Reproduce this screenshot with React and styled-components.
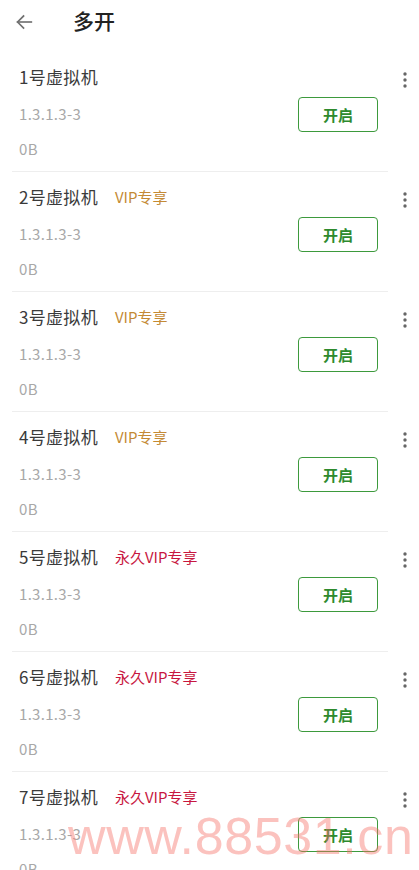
import styled, { createGlobalStyle } from "styled-components"

const GlobalStyle = createGlobalStyle`
    body {
        margin: 0;
        background: #ffffff;
        font-family: "Noto Sans CJK SC", "Noto Sans", sans-serif;
    }
`

const machines = [
    { name: "1号虚拟机", tag: null },
    { name: "2号虚拟机", tag: "vip" },
    { name: "3号虚拟机", tag: "vip" },
    { name: "4号虚拟机", tag: "vip" },
    { name: "5号虚拟机", tag: "forever" },
    { name: "6号虚拟机", tag: "forever" },
    { name: "7号虚拟机", tag: "forever" },
]

export default function App() {
    return (
        <Page>
            <GlobalStyle />
            <Header>
                <BackButton>
                    <svg width="22" height="22" viewBox="0 0 24 24" fill="none" stroke="#707070" strokeWidth="1.8" strokeLinecap="square">
                        <path d="M20 12H5" />
                        <path d="M11.5 5.5L5 12l6.5 6.5" />
                    </svg>
                </BackButton>
                <Title>多开</Title>
            </Header>

            <List>
                {machines.map((m) => (
                    <Row key={m.name}>
                        <Info>
                            <NameLine>
                                <Name>{m.name}</Name>
                                {m.tag === "vip" && <Tag color={"#c48a34"}>VIP专享</Tag>}
                                {m.tag === "forever" && <Tag color={"#c8173f"}>永久VIP专享</Tag>}
                            </NameLine>
                            <Sub>1.3.1.3-3</Sub>
                            <Sub>0B</Sub>
                        </Info>
                        <StartButton>开启</StartButton>
                        <More>
                            <svg width="4" height="16" viewBox="0 0 4 16" fill="#666">
                                <circle cx="2" cy="2" r="1.7" />
                                <circle cx="2" cy="8" r="1.7" />
                                <circle cx="2" cy="14" r="1.7" />
                            </svg>
                        </More>
                    </Row>
                ))}
            </List>

            <Watermark>www.88531.cn</Watermark>
        </Page>
    )
}

const Page = styled.div`
    position: relative;
    width: 419px;
    height: 870px;
    overflow: hidden;
    background: #fff;
`

const Header = styled.div`
    height: 44px;
    display: flex;
    align-items: center;
    padding-left: 13px;
`

const BackButton = styled.div`
    width: 22px;
    height: 22px;
    display: flex;
    align-items: center;
    justify-content: center;
`

const Title = styled.h1`
    margin: -4px 0 0 38px;
    font-size: 21px;
    font-weight: 500;
    color: #222;
`

const List = styled.div`
    display: flex;
    flex-direction: column;
    padding-top: 8px;
`

const Row = styled.div`
    position: relative;
    height: 119px;
    margin: 0 31px 0 12px;
    border-bottom: 1px solid #eeeeee;
    display: flex;
    align-items: flex-start;
    justify-content: space-between;
`

const Info = styled.div`
    display: flex;
    flex-direction: column;
    padding-left: 7px;
    padding-top: 12px;
`

const NameLine = styled.div`
    display: flex;
    align-items: center;
    height: 24px;
`

const Name = styled.span`
    font-size: 17px;
    letter-spacing: 0.3px;
    color: #3a3a3a;
`

const Tag = styled.span`
    margin-left: 17px;
    font-size: 15px;
    color: ${(props) => props.color};
`

const Sub = styled.span`
    font-size: 15px;
    letter-spacing: 0.3px;
    color: #a8a8a8;
    margin-top: 13px;
    height: 22px;
    line-height: 22px;

    &:first-of-type {
        margin-top: 15px;
    }
`

const StartButton = styled.button`
    margin-top: 45px;
    margin-right: 10px;
    width: 80px;
    height: 35px;
    border: 1.5px solid #3d9a3d;
    border-radius: 4px;
    background: #fff;
    color: #2e8a2e;
    font-family: "Noto Sans CJK SC", sans-serif;
    font-size: 15px;
    font-weight: 700;
`

const More = styled.div`
    position: absolute;
    right: -19px;
    top: 20px;
    display: flex;
`

const Watermark = styled.div`
    position: absolute;
    left: 68px;
    top: 806px;
    font-family: "Liberation Sans", Arial, sans-serif;
    font-size: 52px;
    letter-spacing: 0.6px;
    color: rgba(245, 110, 100, 0.42);
    pointer-events: none;
    white-space: nowrap;
`
